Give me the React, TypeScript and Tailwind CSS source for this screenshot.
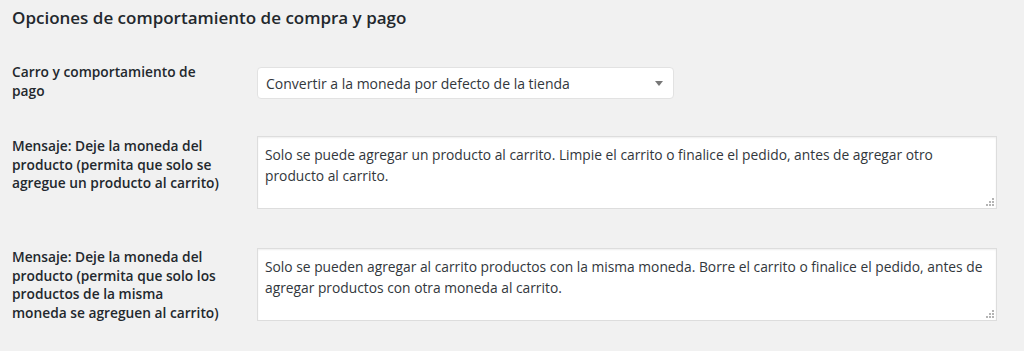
import { memo } from 'react';

const FONT = "font-['Open_Sans',sans-serif]";

export default function App() {
  return (
    <div className={`${FONT} w-full h-[351px] bg-[#f1f1f1] pl-[12px] text-[#23282d] overflow-hidden`}>
      <h2 className="pt-[7px] text-[17px] leading-[22px] font-semibold">
        Opciones de comportamiento de compra y pago
      </h2>

      {/* Carro y comportamiento */}
      <div className="mt-[34px] flex items-start">
        <Label lines={['Carro y comportamiento de', 'pago']} />
        <div className="mt-[4px] w-[417px] h-[32px] bg-white border border-[#e2e2e2] rounded-[4px] flex items-center justify-between pl-[8px] pr-[10px] text-[14px] text-[#32373c]">
          <span>Convertir a la moneda por defecto de la tienda</span>
          <svg viewBox="0 0 8 5" className="w-[8px] h-[5px]">
            <path d="M0 0h8L4 5z" fill="#777" />
          </svg>
        </div>
      </div>

      <div className="mt-[36px] flex items-start">
        <Label
          className="pt-[1px]"
          lines={[
            'Mensaje: Deje la moneda del',
            'producto (permita que solo se',
            'agregue un producto al carrito)',
          ]} />
        <TextBox
          lines={[
            'Solo se puede agregar un producto al carrito. Limpie el carrito o finalice el pedido, antes de agregar otro',
            'producto al carrito.',
          ]} />
      </div>

      <div className="mt-[39px] flex items-start">
        <Label
          lines={[
            'Mensaje: Deje la moneda del',
            'producto (permita que solo los',
            'productos de la misma',
            'moneda se agreguen al carrito)',
          ]} />
        <TextBox
          lines={[
            'Solo se pueden agregar al carrito productos con la misma moneda. Borre el carrito o finalice el pedido, antes de',
            'agregar productos con otra moneda al carrito.',
          ]} />
      </div>
    </div>);

}

function Label({ lines, className = '' }: {lines: string[];className?: string;}) {
  return (
    <div className={`w-[245px] shrink-0 text-[13.75px] leading-[18.5px] font-semibold whitespace-nowrap ${className}`}>
      {lines.map((l, i) =>
      <div key={i}>{l}</div>
      )}
    </div>);

}

const TextBox = memo(function TextBox({ lines }: {lines: string[];}) {
  return (
    <div className="relative w-[740px] h-[73px] bg-white border border-[#dddddd] shadow-[inset_0_1px_2px_rgba(0,0,0,0.07)] pl-[7px] pt-[7px] text-[13.8px] leading-[21px] text-[#32373c] whitespace-nowrap">
      {lines.map((l, i) =>
      <div key={i}>{l}</div>
      )}
      <svg viewBox="0 0 9 9" className="absolute right-[2px] bottom-[2px] w-[9px] h-[9px]">
        <g fill="#b4b4b4">
          <rect x="7" y="1" width="2" height="2" />
          <rect x="4" y="4" width="2" height="2" />
          <rect x="7" y="4" width="2" height="2" />
          <rect x="1" y="7" width="2" height="2" />
          <rect x="4" y="7" width="2" height="2" />
          <rect x="7" y="7" width="2" height="2" />
        </g>
      </svg>
    </div>);

});
